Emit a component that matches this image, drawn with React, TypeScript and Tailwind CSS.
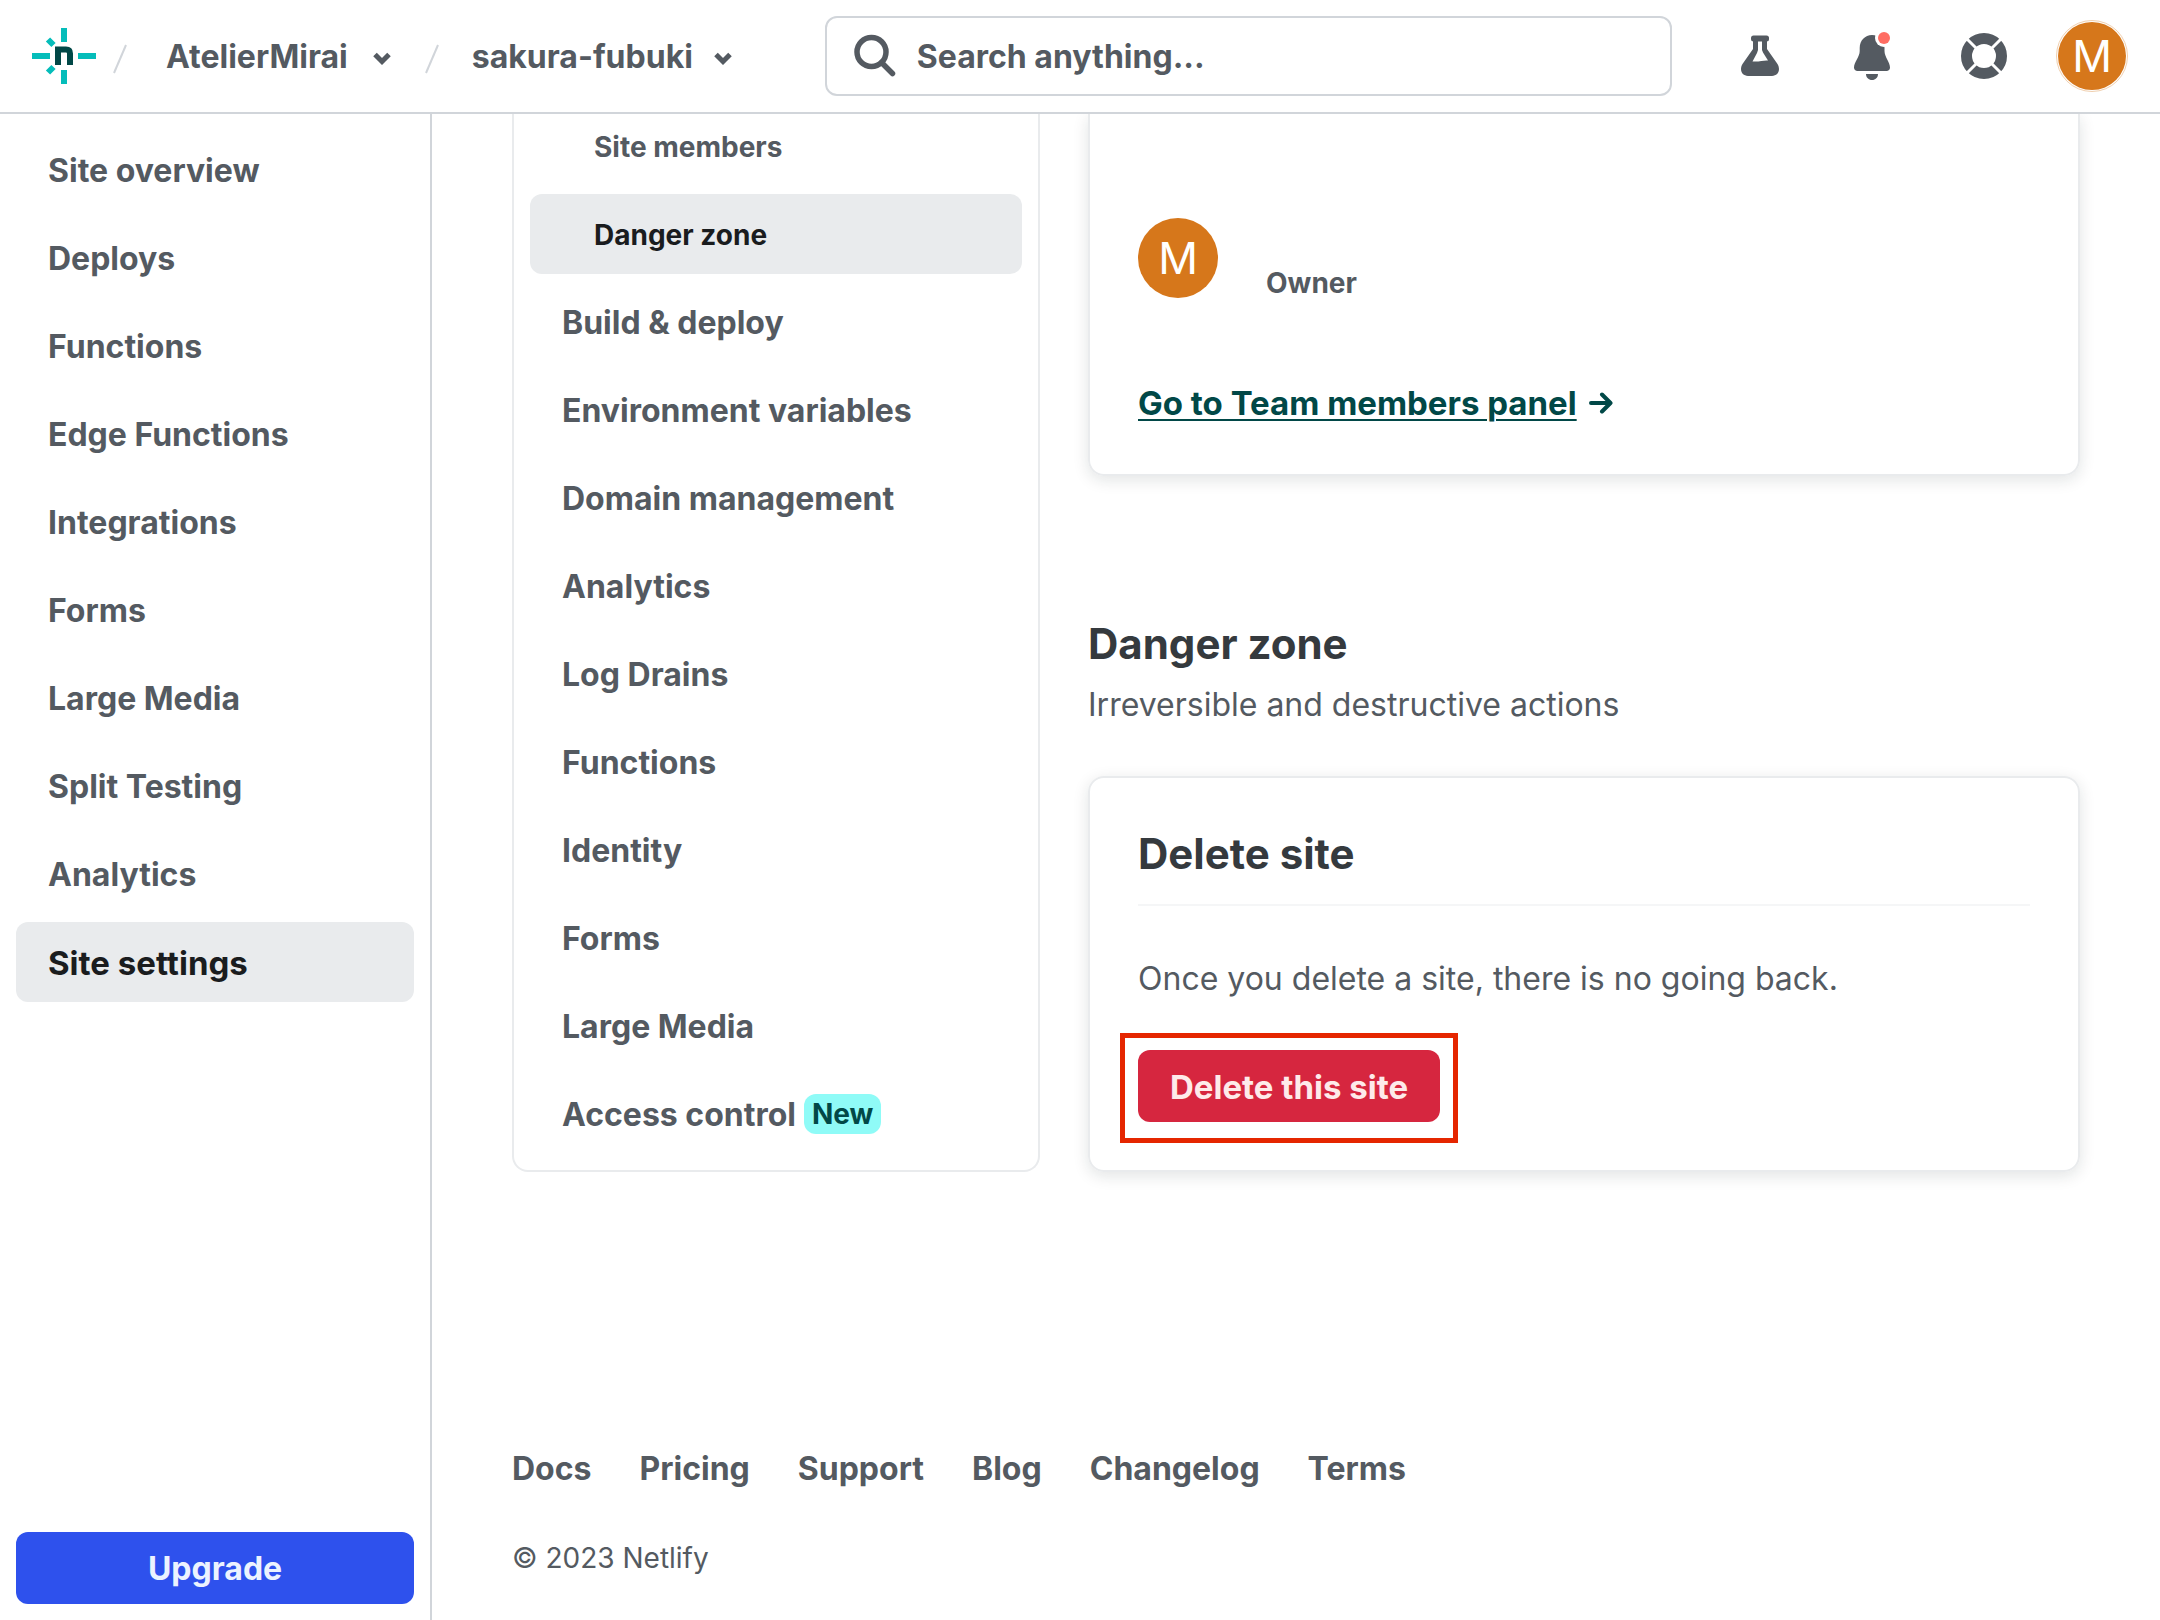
import React from "react";

const siteNav = [
  "Site overview",
  "Deploys",
  "Functions",
  "Edge Functions",
  "Integrations",
  "Forms",
  "Large Media",
  "Split Testing",
  "Analytics",
  "Site settings",
];

type SettingsItem = { label: string; nested?: boolean; active?: boolean; badge?: string };

const settingsNav: SettingsItem[] = [
  { label: "Site members", nested: true },
  { label: "Danger zone", nested: true, active: true },
  { label: "Build & deploy" },
  { label: "Environment variables" },
  { label: "Domain management" },
  { label: "Analytics" },
  { label: "Log Drains" },
  { label: "Functions" },
  { label: "Identity" },
  { label: "Forms" },
  { label: "Large Media" },
  { label: "Access control", badge: "New" },
];

const footerLinks = ["Docs", "Pricing", "Support", "Blog", "Changelog", "Terms"];

function Logo() {
  return (
    <svg className="h-14 w-16" viewBox="0 0 64 56" fill="none" aria-hidden="true">
      <g stroke="#05bdba" strokeWidth="6">
        <path d="M32 0v14M32 42v14M0 28h18M46 28h18" />
        <path d="M16 11.500l5.500 5.500M16 44.500l5.500-5.500" />
      </g>
      <path d="M26 37V19M23 21.500h11q4 0 4 4V37" stroke="#014847" strokeWidth="6" />
    </svg>
  );
}

function Slash() {
  return (
    <svg className="mt-1 h-8 w-4 shrink-0" viewBox="0 0 16 32" fill="none" stroke="#d1d5da" strokeWidth="2" aria-hidden="true">
      <path d="M2 31L14 3" />
    </svg>
  );
}

function Chevron() {
  return (
    <svg className="mt-1 h-5 w-5" viewBox="0 0 20 20" fill="none" stroke="currentColor" strokeWidth="5" aria-hidden="true">
      <path d="M3 5.500l7 7 7-7" />
    </svg>
  );
}

function Flask() {
  return (
    <svg className="h-12 w-12" viewBox="0 0 48 48" fill="currentColor" aria-hidden="true">
      <rect x="15" y="3.500" width="18" height="6" rx="2.500" />
      <path
        fillRule="evenodd"
        d="M17 6v11L6.500 32C3 38 6 44 12 44h24c6 0 9-6 5.500-12L31 17V6zM22 9h4v9l1 2.500 5 8c-4.500-.5-8 1.500-15.500 1L21 21l1-3z"
      />
    </svg>
  );
}

function Bell() {
  return (
    <svg className="h-12 w-12" viewBox="0 0 48 48" fill="currentColor" aria-hidden="true">
      <path d="M24 3C17 3 11.700 8.500 11.700 16v3C11.700 25 6 30 6 35.500 6 37.500 7.500 39 9.500 39h29c2 0 3.500-1.500 3.500-3.500C42 30 36.500 25 36.500 19v-3C36.500 8.500 31 3 24 3z" />
      <path d="M18 42h12c0 3.500-2.600 6-6 6s-6-2.500-6-6z" />
      <circle cx="36" cy="6" r="9" fill="#fff" />
      <circle cx="36" cy="6" r="6" fill="#ff6d63" />
    </svg>
  );
}

function LifeRing() {
  return (
    <svg className="h-12 w-12" viewBox="0 0 48 48" fill="none" aria-hidden="true">
      <circle cx="24" cy="24" r="17.500" stroke="currentColor" strokeWidth="11" />
      <path d="M6 6l36 36M42 6L6 42" stroke="#fff" strokeWidth="3" />
    </svg>
  );
}

function Header() {
  return (
    <header className="flex h-[114px] shrink-0 items-center border-b-2 border-[#d1d5da] bg-white px-8">
      <a href="#home" aria-label="Netlify home" className="mr-4">
        <Logo />
      </a>
      <Slash />
      <button type="button" className="ml-[38px] flex items-center gap-6 pt-0.5">
        AtelierMirai
        <Chevron />
      </button>
      <span className="ml-8 flex">
        <Slash />
      </span>
      <button type="button" className="ml-8 flex items-center gap-5 pt-0.5">
        sakura-fubuki
        <Chevron />
      </button>
      <label className="ml-[92px] flex h-20 flex-1 items-center gap-5 rounded-xl border-2 border-[#d1d5da] px-[26px]">
        <svg className="h-11 w-11 shrink-0" viewBox="0 0 44 44" fill="none" stroke="currentColor" aria-hidden="true">
          <circle cx="18.500" cy="18" r="14.500" strokeWidth="5.500" />
          <path d="M28.500 28.500L39.500 39.500" strokeWidth="5.500" strokeLinecap="round" />
        </svg>
        <input
          type="search"
          aria-label="Search anything"
          placeholder="Search anything..."
          className="w-full bg-transparent pt-0.5 outline-none placeholder:text-[#545a61] placeholder:opacity-100"
        />
      </label>
      <div className="ml-16 flex items-center gap-16">
        <button type="button" aria-label="Labs">
          <Flask />
        </button>
        <button type="button" aria-label="Notifications">
          <Bell />
        </button>
        <button type="button" aria-label="Help">
          <LifeRing />
        </button>
      </div>
      <button
        type="button"
        aria-label="Account"
        className="ml-12 flex h-[72px] w-[72px] items-center justify-center rounded-full border border-[#f0cfae] p-px"
      >
        <span className="flex h-full w-full items-center justify-center rounded-full bg-[#d6771b] text-[44px] leading-none font-normal text-white">
          M
        </span>
      </button>
    </header>
  );
}

function Sidebar() {
  return (
    <aside className="flex w-[432px] shrink-0 flex-col justify-between border-r-2 border-[#d1d5da] p-4">
      <nav aria-label="Site">
        <ul className="flex flex-col gap-2">
          {siteNav.map((label) => (
            <li key={label}>
              <a
                href="#nav"
                className={
                  label === "Site settings"
                    ? "flex h-20 items-center rounded-xl bg-[#e9ebed] px-8 pt-0.5 text-[33px] font-bold text-[#1a1c1e]"
                    : "flex h-20 items-center rounded-xl px-8 pt-0.5"
                }
              >
                {label}
              </a>
            </li>
          ))}
        </ul>
      </nav>
      <button type="button" className="h-[72px] rounded-xl bg-[#2e51ed] pt-0.5 font-bold text-[#ecf3ff]">
        Upgrade
      </button>
    </aside>
  );
}

function SettingsNav() {
  return (
    <nav aria-label="Settings" className="w-[528px] shrink-0 rounded-b-2xl border-2 border-t-0 border-[#e9ebed] px-4 pb-4">
      <ul className="-mt-2 flex flex-col gap-2">
        {settingsNav.map(({ label, nested, active, badge }) => (
          <li key={label}>
            <a
              href="#settings"
              className={
                active
                  ? "flex h-20 items-center rounded-xl bg-[#e9ebed] px-16 pt-0.5 text-[28px] font-bold text-[#1a1c1e]"
                  : nested
                    ? "flex h-20 items-center px-16 pt-0.5 text-[28px]"
                    : "flex h-20 items-center px-8 pt-0.5"
              }
            >
              {label}
              {badge && (
                <span className="mb-0.5 ml-2 rounded-xl bg-[#8ffbf7] px-2 text-[28px] leading-10 font-bold text-[#014847]">
                  {badge}
                </span>
              )}
            </a>
          </li>
        ))}
      </ul>
    </nav>
  );
}

function Content() {
  return (
    <div className="flex-1">
      <section
        aria-label="Site members"
        className="rounded-b-2xl border-2 border-t-0 border-[#e9ebed] px-12 pt-[104px] pb-12 shadow-[0_4px_16px_rgba(14,30,37,0.12)]"
      >
        <div className="flex items-end gap-12">
          <span className="flex h-20 w-20 items-center justify-center rounded-full bg-[#d6771b] text-[44px] font-normal text-white">
            M
          </span>
          <span className="text-[28px] leading-[30px]">Owner</span>
        </div>
        <a href="#members" className="mt-[81px] -mb-px flex items-center gap-3 text-[33px] font-bold text-[#014847]">
          <span className="underline decoration-2 underline-offset-4">Go to Team members panel</span>
          <svg className="h-6 w-6" viewBox="0 0 24 24" fill="none" stroke="currentColor" strokeWidth="4" strokeLinecap="round" strokeLinejoin="round" aria-hidden="true">
            <path d="M2 12h19M13 3.500l8.500 8.500-8.500 8.500" />
          </svg>
        </a>
      </section>

      <section aria-labelledby="danger-heading" className="mt-[140px]">
        <h2 id="danger-heading" className="text-[42px] leading-14 text-[#353a3e]">
          Danger zone
        </h2>
        <p className="mt-[9px] font-normal">Irreversible and destructive actions</p>
        <div className="mt-[47px] rounded-2xl border-2 border-[#e9ebed] p-12 shadow-[0_4px_16px_rgba(14,30,37,0.12)]">
          <h3 className="border-b-2 border-[#f5f6f7] pb-[22px] text-[42px] leading-14 text-[#353a3e]">Delete site</h3>
          <p className="mt-[49px] font-normal">Once you delete a site, there is no going back.</p>
          <div className="relative mt-[47px] w-fit">
            <button type="button" className="h-[72px] rounded-xl bg-[#d6263f] px-8 pt-0.5 text-[33px] font-bold text-[#feeaea]">
              Delete this site
            </button>
            <span className="pointer-events-none absolute -inset-x-[18px] -top-[17px] -bottom-[21px] border-5 border-[#e52600]" />
          </div>
        </div>
      </section>
    </div>
  );
}

export default function App() {
  return (
    <div className="flex h-screen flex-col bg-white font-[Inter,sans-serif] text-[32px] leading-12 font-[650] text-[#545a61]">
      <Header />
      <div className="flex min-h-0 flex-1">
        <Sidebar />
        <main className="flex-1 overflow-hidden px-20">
          <div className="flex items-start gap-12">
            <SettingsNav />
            <Content />
          </div>
          <footer className="mt-[273px]">
            <ul className="flex gap-12">
              {footerLinks.map((label) => (
                <li key={label}>
                  <a href="#footer">{label}</a>
                </li>
              ))}
            </ul>
            <p className="mt-[43px] text-[28px] leading-11 font-normal">© 2023 Netlify</p>
          </footer>
        </main>
      </div>
    </div>
  );
}
